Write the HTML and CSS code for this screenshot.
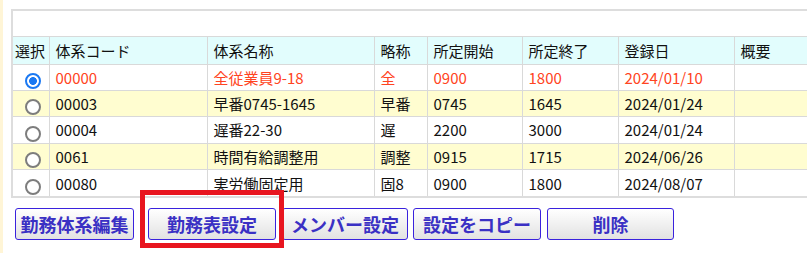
FILE: index.html
```html
<!DOCTYPE html>
<html lang="ja">
<head>
<meta charset="utf-8">
<title>勤務体系</title>
<link rel="stylesheet" href="styles.css">
</head>
<body>
<div class="page">
  <div class="panel">
    <div class="caption"></div>
    <table class="grid">
      <colgroup>
        <col class="c-sel"><col class="c-code"><col class="c-name"><col class="c-abbr">
        <col class="c-start"><col class="c-end"><col class="c-date"><col class="c-note">
      </colgroup>
      <thead>
        <tr><th>選択</th><th>体系コード</th><th>体系名称</th><th>略称</th><th>所定開始</th><th>所定終了</th><th>登録日</th><th>概要</th></tr>
      </thead>
      <tbody>
        <tr class="current"><td class="sel"><input class="radio" type="radio" name="sys" checked></td><td>00000</td><td>全従業員9-18</td><td>全</td><td>0900</td><td>1800</td><td>2024/01/10</td><td></td></tr>
        <tr class="alt"><td class="sel"><input class="radio" type="radio" name="sys"></td><td>00003</td><td>早番0745-1645</td><td>早番</td><td>0745</td><td>1645</td><td>2024/01/24</td><td></td></tr>
        <tr><td class="sel"><input class="radio" type="radio" name="sys"></td><td>00004</td><td>遅番22-30</td><td>遅</td><td>2200</td><td>3000</td><td>2024/01/24</td><td></td></tr>
        <tr class="alt"><td class="sel"><input class="radio" type="radio" name="sys"></td><td>0061</td><td>時間有給調整用</td><td>調整</td><td>0915</td><td>1715</td><td>2024/06/26</td><td></td></tr>
        <tr class="last"><td class="sel"><input class="radio" type="radio" name="sys"></td><td>00080</td><td>実労働固定用</td><td>固8</td><td>0900</td><td>1800</td><td>2024/08/07</td><td></td></tr>
      </tbody>
    </table>
  </div>
  <div class="actions">
    <button class="btn btn-edit">勤務体系編集</button>
    <button class="btn btn-sheet">勤務表設定</button>
    <button class="btn btn-member">メンバー設定</button>
    <button class="btn btn-copy">設定をコピー</button>
    <button class="btn btn-delete">削除</button>
  </div>
</div>
<div class="highlight"></div>
</body>
</html>
```
FILE: styles.css
```css
html, body {
  margin: 0;
  padding: 0;
  background: #ffffff;
  overflow: hidden;
}
body {
  position: relative;
  width: 807px;
  height: 253px;
  font-family: "Noto Sans CJK JP", "Noto Sans", sans-serif;
  font-size: 15px;
  color: #111111;
}
.page {
  box-sizing: border-box;
  height: 253px;
  border-left: 3px solid #fff5d6;
  padding: 9px 0 0 8px;
  overflow: hidden;
}
.panel {
  border: 2px solid #dddddd;
  border-right: 0;
}
.caption {
  height: 25px;
  border-bottom: 1px solid #d9d9d9;
}
.grid {
  border-collapse: collapse;
  table-layout: fixed;
  width: 841px;
}
.c-sel { width: 36px; }
.c-code { width: 158px; }
.c-name { width: 167px; }
.c-abbr { width: 53px; }
.c-start { width: 95px; }
.c-end { width: 96px; }
.c-date { width: 116px; }
.c-note { width: 120px; }
.grid th, .grid td {
  border-left: 1px solid #d9d9d9;
  border-bottom: 1px solid #d9d9d9;
  padding: 0 0 0 6px;
  text-align: left;
  font-weight: normal;
  white-space: nowrap;
  overflow: hidden;
  vertical-align: middle;
}
.grid th:first-child, .grid td:first-child {
  border-left: 0;
}
.grid thead tr {
  height: 27px;
  background: #e2fdfd;
}
.grid th:first-child {
  padding-left: 2px;
}
.grid tbody tr {
  height: 26.4px;
}
.grid tbody tr.last td {
  border-bottom: 0;
}
.grid tr.alt {
  background: #fffdd0;
}
.grid tr.current td {
  color: #ff4422;
}
.grid td.sel {
  padding: 0;
  text-align: center;
}
.radio {
  appearance: none;
  -webkit-appearance: none;
  display: inline-block;
  box-sizing: border-box;
  width: 16px;
  height: 16px;
  min-width: 16px;
  margin: 5px 0 0 5px;
  padding: 0;
  vertical-align: middle;
  border: 2px solid #7d7d7d;
  border-radius: 50%;
  background: #ffffff;
}
.radio:checked {
  border: 2px solid #1a78f2;
  background: radial-gradient(circle, #1a78f2 0 3.6px, #ffffff 4.2px);
}
.actions {
  display: flex;
  margin: 10px 0 0 4px;
}
.btn {
  box-sizing: border-box;
  height: 32px;
  padding: 0;
  border: 1px solid #3a22dd;
  border-radius: 3px;
  background: linear-gradient(#ffffff, #e2e2e2);
  color: #3a30c4;
  font-family: "Noto Sans CJK JP", "Noto Sans", sans-serif;
  font-size: 18px;
  font-weight: bold;
  white-space: nowrap;
}
.btn-edit { width: 119px; }
.btn-sheet { width: 128px; margin-left: 14px; }
.btn-member { width: 126px; margin-left: 6px; }
.btn-copy { width: 128px; margin-left: 5px; }
.btn-delete { width: 127px; margin-left: 6px; }
.highlight {
  position: absolute;
  left: 140px;
  top: 190px;
  width: 144px;
  height: 58px;
  box-sizing: border-box;
  border: 5px solid #e8151f;
}
```
